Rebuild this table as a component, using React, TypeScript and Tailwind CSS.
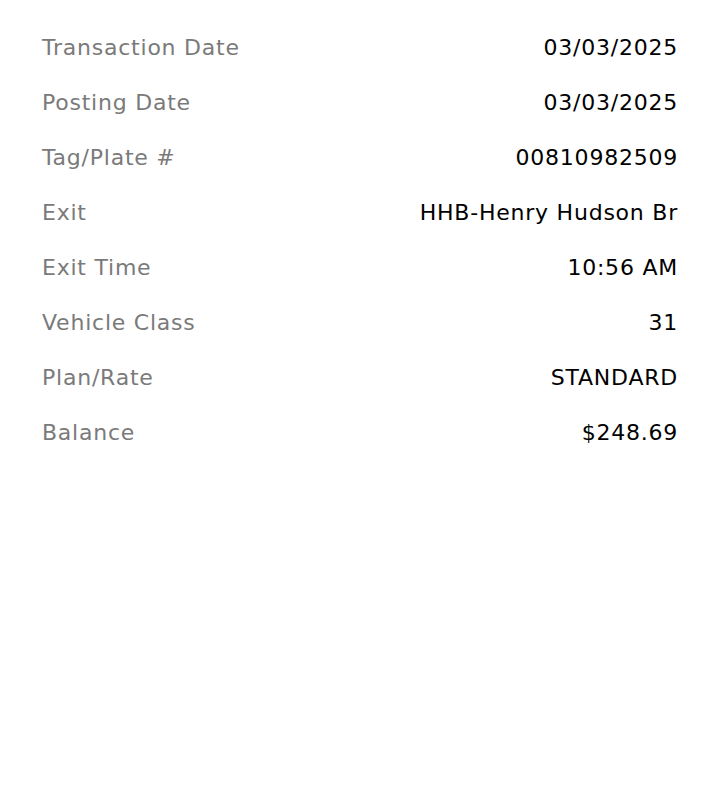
const rows: [string, string][] = [
  ["Transaction Date", "03/03/2025"],
  ["Posting Date", "03/03/2025"],
  ["Tag/Plate #", "00810982509"],
  ["Exit", "HHB-Henry Hudson Br"],
  ["Exit Time", "10:56 AM"],
  ["Vehicle Class", "31"],
  ["Plan/Rate", "STANDARD"],
  ["Balance", "$248.69"],
];

export default function App() {
  return (
    <div className="min-h-screen bg-white px-[42px] pt-[20px] font-['DejaVu_Sans',sans-serif]">
      {rows.map(([label, value]) => (
        <div key={label} className="flex h-[55px] items-center justify-between text-[22px] tracking-[0.035em]">
          <span className="text-[#7a7a7a]">{label}</span>
          <span className="text-black">{value}</span>
        </div>
      ))}
    </div>
  );
}
